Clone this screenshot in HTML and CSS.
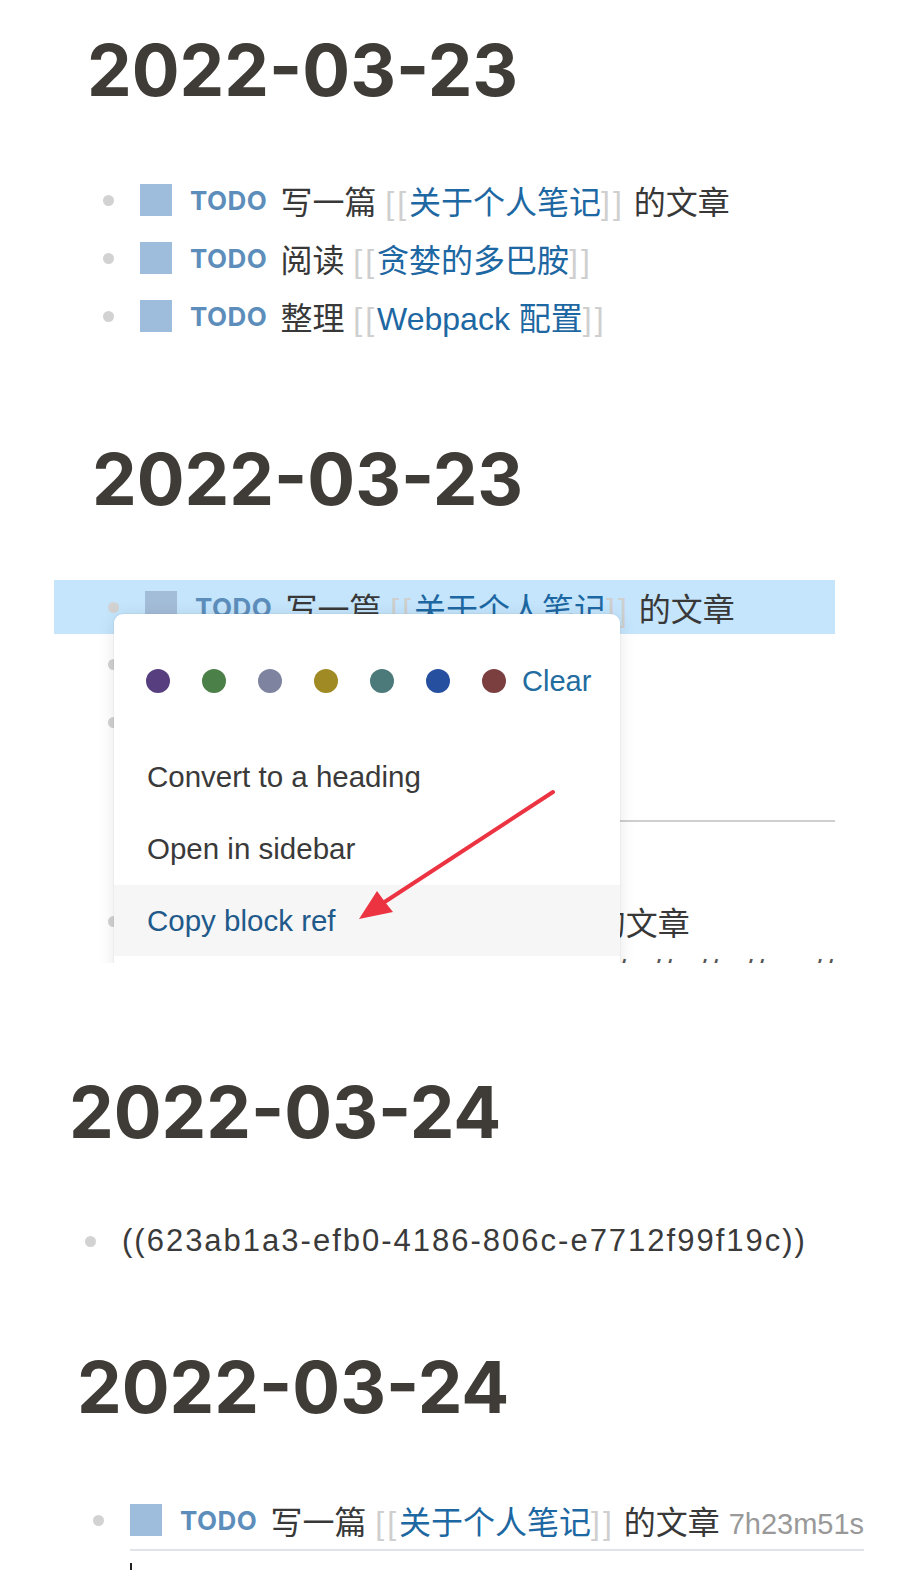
FILE: index.html
```html
<!DOCTYPE html>
<html lang="zh">
<head>
<meta charset="utf-8">
<title>Logseq block ref</title>
<link rel="stylesheet" href="styles.css">
</head>
<body>
<div class="page">
  <section class="panel p1">
    <h1 class="date">2022-03-23</h1>
    <div class="rows">
      <div class="row"><span class="bullet"></span><span class="check"></span><span class="todo">TODO</span><span class="txt">写一篇 <span class="br">[[</span><span class="link">关于个人笔记</span><span class="br">]]</span> 的文章</span></div>
      <div class="row"><span class="bullet"></span><span class="check"></span><span class="todo">TODO</span><span class="txt">阅读 <span class="br">[[</span><span class="link">贪婪的多巴胺</span><span class="br">]]</span></span></div>
      <div class="row"><span class="bullet"></span><span class="check"></span><span class="todo">TODO</span><span class="txt">整理 <span class="br">[[</span><span class="link">Webpack 配置</span><span class="br">]]</span></span></div>
    </div>
  </section>

  <section class="panel p2">
    <h1 class="date">2022-03-23</h1>
    <div class="stage">
      <div class="row sel"><span class="bullet"></span><span class="check"></span><span class="todo">TODO</span><span class="txt">写一篇 <span class="br">[[</span><span class="link">关于个人笔记</span><span class="br">]]</span> 的文章</span></div>
      <div class="row r2"><span class="bullet"></span><span class="check"></span><span class="todo">TODO</span><span class="txt">阅读 <span class="br">[[</span><span class="link">贪婪的多巴胺</span><span class="br">]]</span></span></div>
      <div class="row r3"><span class="bullet"></span><span class="check"></span><span class="todo">TODO</span><span class="txt">整理 <span class="br">[[</span><span class="link">Webpack 配置</span><span class="br">]]</span></span></div>
      <div class="row lined"></div>
      <div class="row low"><span class="bullet"></span><span class="todo">TODO</span><span class="txt">写一篇 <span class="br">[[</span><span class="link">关于个人笔记</span><span class="br">]]</span> 的文章</span></div>
      <div class="row cut"><span class="txt">的的的的 的 的的 的 的的的的 的 的</span></div>

      <div class="menu">
        <div class="colors">
          <span class="dot c1"></span><span class="dot c2"></span><span class="dot c3"></span><span class="dot c4"></span><span class="dot c5"></span><span class="dot c6"></span><span class="dot c7"></span>
          <span class="clear">Clear</span>
        </div>
        <div class="item">Convert to a heading</div>
        <div class="item">Open in sidebar</div>
        <div class="item active">Copy block ref</div>
        <div class="item">Copy as</div>
      </div>
    </div>
  </section>

  <section class="panel p3">
    <h1 class="date">2022-03-24</h1>
    <div class="rows">
      <div class="row"><span class="bullet"></span><span class="txt ref">((623ab1a3-efb0-4186-806c-e7712f99f19c))</span></div>
    </div>
  </section>

  <section class="panel p4">
    <h1 class="date">2022-03-24</h1>
    <div class="rows">
      <div class="row timer-row"><span class="bullet"></span><span class="content"><span class="check"></span><span class="todo">TODO</span><span class="txt">写一篇 <span class="br">[[</span><span class="link">关于个人笔记</span><span class="br">]]</span> 的文章 <span class="timer">7h23m51s</span></span></span></div>
      <div class="caret-line"><span class="caret"></span></div>
    </div>
  </section>

  <svg class="arrow" width="898" height="1570" viewBox="0 0 898 1570" xmlns="http://www.w3.org/2000/svg">
    <line x1="553" y1="792" x2="380" y2="905" stroke="#ec3342" stroke-width="4" stroke-linecap="round"/>
    <polygon points="359,919 377,891 385,902 393,912" fill="#ec3342"/>
  </svg>
</div>
</body>
</html>
```

FILE: styles.css
```css
* { box-sizing: border-box; }
html, body { margin: 0; padding: 0; background: #fff; }
.page {
  position: relative;
  width: 898px;
  height: 1570px;
  overflow: hidden;
  font-family: "Liberation Sans", "Noto Sans CJK SC", sans-serif;
  color: #383838;
}
.date {
  margin: 0;
  font-family: Inter, "Liberation Sans", sans-serif;
  font-weight: 700;
  font-size: 71px;
  line-height: 74px;
  color: #3f3b36;
}
.panel { display: flex; flex-direction: column; }
.p1 { padding: 33px 0 0 87px; }
.p2 { padding: 97px 0 0 92px; }
.p3 { padding: 112px 0 0 69px; }
.p4 { padding: 80px 0 0 77px; }

.rows { display: flex; flex-direction: column; margin-left: 16px; }
.p1 .rows { margin-top: 64px; }
.p3 .rows { margin-top: 63px; }
.p4 .rows { margin-top: 69px; }

.row {
  display: flex;
  align-items: center;
  height: 58px;
  white-space: nowrap;
}
.bullet {
  flex: none;
  width: 11px;
  height: 11px;
  border-radius: 50%;
  background: #d2d2d2;
  margin-right: 26px;
}
.check {
  flex: none;
  width: 32px;
  height: 32px;
  background: #9ebcdb;
  margin-right: 18px;
}
.todo {
  font-family: Inter, "Liberation Sans", sans-serif;
  font-weight: 700;
  font-size: 26px;
  color: #5d8ebb;
  margin-right: 13px;
  letter-spacing: 0.5px;
}
.txt { font-size: 32px; color: #383838; }
.br { color: #cfcfcf; font-weight: 300; letter-spacing: 3px; }
.link { color: #1d67a2; }

/* panel 2 */
.stage {
  position: relative;
  margin-top: 64px;
  margin-left: -38px;
  width: 781px;
  height: 383px;
  overflow: hidden;
  display: flex;
  flex-direction: column;
  padding-left: 54px;
}
.stage .row { flex: none; }
.stage .row.sel {
  height: 54px;
  margin-left: -54px;
  padding-left: 54px;
  background: #c4e5fc;
}
.stage .row.sel .check { background: #a3bcd8; }
.stage .row.r2 { height: 60px; }
.stage .row.r3 { height: 56px; }
.stage .row.lined {
  height: 72px;
  margin-left: 37px;
  border-bottom: 2px solid #cfcfcf;
}
.stage .row.low { margin-top: 70px; height: 58px; }
.stage .row.low .todo { margin-left: 5px; }
.stage .row.cut { height: 40px; align-items: flex-start; padding-left: 37px; }
.stage .row.cut .txt { margin-top: -1px; letter-spacing: 14px; color: #555; }

.menu {
  position: absolute;
  left: 60px;
  top: 34px;
  width: 506px;
  height: 420px;
  background: #fff;
  border-radius: 9px;
  box-shadow: 0 2px 18px rgba(0, 0, 0, 0.09), 0 0 0 1px rgba(0, 0, 0, 0.03);
  padding-top: 48px;
  display: flex;
  flex-direction: column;
}
.colors {
  display: flex;
  align-items: center;
  height: 38px;
  padding-left: 32px;
  gap: 32px;
  margin-bottom: 41px;
}
.dot { width: 24px; height: 24px; border-radius: 50%; flex: none; }
.c1 { background: #573f7f; }
.c2 { background: #4b8049; }
.c3 { background: #7e839f; }
.c4 { background: #a08a24; }
.c5 { background: #4c7a7b; }
.c6 { background: #26509f; }
.c7 { background: #7c3f40; }
.clear {
  font-size: 29px;
  color: #226c9f;
  margin-left: -16px;
}
.item {
  height: 72px;
  display: flex;
  align-items: center;
  padding-left: 33px;
  font-size: 29.5px;
  color: #3a3a3a;
}
.item.active { background: #f6f6f6; color: #1f5a8a; height: 71px; }

/* panel 3 */
.ref { font-size: 31px; letter-spacing: 2px; color: #3a3a3a; }

/* panel 4 */
.timer-row { height: 58px; align-items: stretch; }
.timer-row .bullet { align-self: center; margin-top: -4px; }
.content {
  display: flex;
  align-items: center;
  border-bottom: 2px solid #dfe4eb;
  padding-bottom: 2px;
}
.timer { font-size: 29px; color: #999; }
.caret-line { padding-left: 37px; padding-top: 12px; }
.caret { display: block; width: 2px; height: 14px; background: #222; }

.arrow {
  position: absolute;
  left: 0;
  top: 0;
  pointer-events: none;
}
```
